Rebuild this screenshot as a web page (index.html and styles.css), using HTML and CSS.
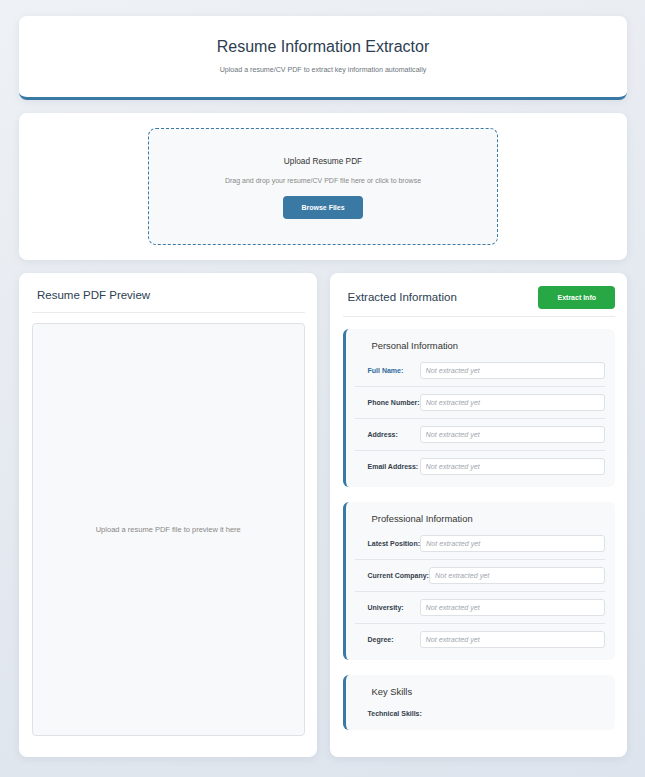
FILE: index.html
```html
<!doctype html>
<html>
    <head>
        <link rel="stylesheet" href="styles.css">
    </head>
    <body>
        <div class="page">
            <header class="card header">
                <h1>Resume Information Extractor</h1>
                <p>Upload a resume/CV PDF to extract key information automatically</p>
            </header>

            <section class="card upload">
                <div class="dropzone">
                    <h3>Upload Resume PDF</h3>
                    <p>Drag and drop your resume/CV PDF file here or click to browse</p>
                    <button class="btn btn-blue">Browse Files</button>
                </div>
            </section>

            <div class="columns">
                <section class="card preview-card">
                    <div class="card-head">
                        <h2>Resume PDF Preview</h2>
                    </div>
                    <div class="preview">
                        <span>Upload a resume PDF file to preview it here</span>
                    </div>
                </section>

                <section class="card info-card">
                    <div class="card-head">
                        <h2>Extracted Information</h2>
                        <button class="btn btn-green">Extract Info</button>
                    </div>

                    <div class="group">
                        <h4>Personal Information</h4>
                        <div class="row">
                            <label class="active">Full Name:</label>
                            <input type="text" placeholder="Not extracted yet">
                        </div>
                        <div class="row">
                            <label>Phone Number:</label>
                            <input type="text" placeholder="Not extracted yet">
                        </div>
                        <div class="row">
                            <label>Address:</label>
                            <input type="text" placeholder="Not extracted yet">
                        </div>
                        <div class="row">
                            <label>Email Address:</label>
                            <input type="text" placeholder="Not extracted yet">
                        </div>
                    </div>

                    <div class="group">
                        <h4>Professional Information</h4>
                        <div class="row">
                            <label>Latest Position:</label>
                            <input type="text" placeholder="Not extracted yet">
                        </div>
                        <div class="row">
                            <label>Current Company:</label>
                            <input type="text" placeholder="Not extracted yet">
                        </div>
                        <div class="row">
                            <label>University:</label>
                            <input type="text" placeholder="Not extracted yet">
                        </div>
                        <div class="row">
                            <label>Degree:</label>
                            <input type="text" placeholder="Not extracted yet">
                        </div>
                    </div>

                    <div class="group skills">
                        <h4>Key Skills</h4>
                        <div class="row">
                            <label>Technical Skills:</label>
                        </div>
                    </div>
                </section>
            </div>
        </div>
    </body>
</html>
```

FILE: styles.css
```css
html {
    min-height: 100%;
    background: linear-gradient(160deg, #eef1f5 0%, #e3e8ef 60%, #dde4ed 100%);
}
body {
    margin: 0;
    font-family: "Segoe UI", "Liberation Sans", sans-serif;
    color: #333;
}
.page {
    padding: 16px 18px 21px 19px;
}
.card {
    background: #fff;
    border-radius: 8px;
    box-shadow: 0 2px 8px rgba(40, 60, 90, 0.08);
    margin-bottom: 13px;
}
.header {
    text-align: center;
    padding: 21px 20px 22px;
    border-bottom: 3px solid #3b79a5;
}
.header h1 {
    margin: 0 0 10px;
    font-size: 16px;
    line-height: 19px;
    font-weight: normal;
    color: #2c3e50;
}
.header p {
    margin: 0;
    font-size: 7.1px;
    line-height: 9px;
    color: #6c757d;
}
.upload {
    padding: 15px;
}
.dropzone {
    max-width: 348px;
    margin: 0 auto;
    border: 1px dashed #3b79a5;
    border-radius: 8px;
    background: #f8f9fa;
    padding: 27px 0 25px;
    text-align: center;
}
.dropzone h3 {
    margin: 0 0 9px;
    font-size: 8.3px;
    line-height: 11px;
    font-weight: normal;
    color: #333;
}
.dropzone p {
    margin: 0 0 11px;
    font-size: 7px;
    line-height: 9px;
    color: #888;
}
.btn {
    border: none;
    border-radius: 4px;
    color: #fff;
    font-family: inherit;
    font-weight: bold;
    font-size: 7px;
    height: 23px;
    padding: 0 18px;
    cursor: pointer;
}
.btn-blue {
    background: #3b79a5;
}
.btn-green {
    background: #28a745;
    padding: 0 19px;
}
.columns {
    display: grid;
    grid-template-columns: 1fr 1fr;
    gap: 13px;
}
.columns .card {
    margin-bottom: 0;
    padding: 13px 12px 12px 13px;
}
.card-head {
    display: flex;
    align-items: center;
    justify-content: space-between;
    border-bottom: 1px solid #e9ecef;
}
.card-head h2 {
    margin: 0;
    padding-left: 5px;
    font-size: 11.5px;
    line-height: 15px;
    font-weight: normal;
    color: #2c3e50;
}
.preview-card {
    display: flex;
    flex-direction: column;
}
.preview-card .card-head {
    padding: 2px 0 9px;
}
.preview {
    flex: 1;
    margin: 10px 0 9px;
    border: 1px solid #dee2e6;
    border-radius: 4px;
    background: #f8f9fa;
    display: flex;
    align-items: center;
    justify-content: center;
    font-size: 7.5px;
    color: #888;
}
.info-card .card-head {
    padding-bottom: 7px;
    margin-bottom: 12px;
}
.group {
    background: #f8f9fa;
    border-left: 3px solid #3b79a5;
    border-radius: 6px;
    padding: 10px 10px 12px 9px;
    margin-bottom: 15px;
}
.group h4 {
    margin: 0 0 2px;
    padding-left: 17px;
    font-size: 9.4px;
    line-height: 14px;
    font-weight: normal;
    color: #333;
}
.row {
    display: flex;
    align-items: center;
    padding: 7px 0 7px 13px;
    border-bottom: 1px solid #e3e7eb;
}
.row:last-child {
    border-bottom: none;
    padding-bottom: 0;
}
.row label {
    flex-shrink: 0;
    min-width: 52px;
    white-space: nowrap;
    font-size: 7px;
    font-weight: bold;
    color: #34404c;
}
.row label.active {
    color: #2d6a99;
}
.row input {
    flex: 1;
    min-width: 0;
    height: 17px;
    box-sizing: border-box;
    border: 1px solid #dee2e6;
    border-radius: 3px;
    background: #fff;
    padding: 0 5px;
    font-family: inherit;
    font-size: 7.2px;
}
.row input::placeholder {
    font-style: italic;
    color: #a0a6ad;
}
.skills {
    padding-bottom: 11px;
}
.skills .row {
    padding: 9px 0 2px 13px;
}
```
